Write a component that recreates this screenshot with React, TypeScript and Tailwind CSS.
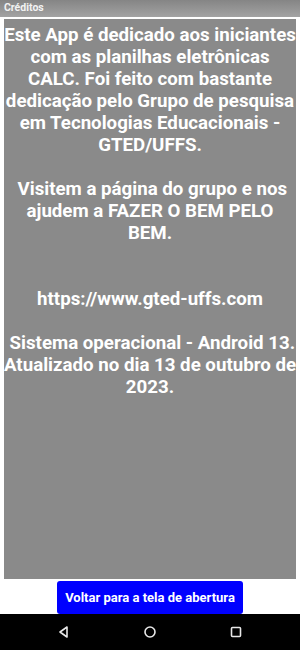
import React from "react";

const lines: string[] = [
  "Este App é dedicado aos iniciantes",
  "com as planilhas eletrônicas",
  "CALC. Foi feito com bastante",
  "dedicação pelo Grupo de pesquisa",
  "em Tecnologias Educacionais -",
  "GTED/UFFS.",
  "",
  " Visitem a página do grupo e nos",
  "ajudem a FAZER O BEM PELO",
  "BEM.",
  "",
  "",
  "https://www.gted-uffs.com",
  "",
  " Sistema operacional - Android 13.",
  "Atualizado no dia 13 de outubro de",
  "2023.",
];

export default function App() {
  return (
    <div
      className="w-[300px] h-[650px] bg-white flex flex-col overflow-hidden"
      style={{ fontFamily: "Roboto, 'Noto Sans', sans-serif" }}
    >
      <div className="h-[17px] shrink-0 bg-gradient-to-b from-[#858585] to-[#a3a3a3] flex items-center px-[4px]">
        <span className="text-[10.5px] font-bold text-[#f2f2f2] leading-none">Créditos</span>
      </div>
      <div className="h-[2px] shrink-0 bg-white" />
      <div className="mx-[4px] h-[560px] shrink-0 bg-[#8a8a8a] pt-[5px] flex flex-col items-center">
        {lines.map((l, i) => (
          <div
            key={i}
            className="h-[22px] leading-[22px] text-[18.7px] font-bold text-white whitespace-pre text-center"
          >
            {l}
          </div>
        ))}
      </div>
      <div className="flex-1 flex justify-center items-start pt-[2px]">
        <button className="w-[186px] h-[33px] bg-[#0000ff] rounded-[3px] text-white text-[13px] font-bold">
          Voltar para a tela de abertura
        </button>
      </div>
      <div className="h-[36px] shrink-0 bg-black flex items-center justify-between px-[57px]">
        <svg width="14" height="14" viewBox="0 0 14 14">
          <path d="M10 2 L3 7 L10 12 Z" fill="none" stroke="#e8e8e8" strokeWidth="1.6" strokeLinejoin="round" />
        </svg>
        <svg width="14" height="14" viewBox="0 0 14 14">
          <circle cx="7" cy="7" r="5" fill="none" stroke="#e8e8e8" strokeWidth="1.6" />
        </svg>
        <svg width="14" height="14" viewBox="0 0 14 14">
          <rect x="2.5" y="2.5" width="9" height="9" rx="1" fill="none" stroke="#e8e8e8" strokeWidth="1.6" />
        </svg>
      </div>
    </div>
  );
}
